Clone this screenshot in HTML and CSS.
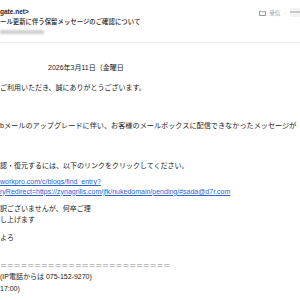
FILE: index.html
```html
<!DOCTYPE html>
<html lang="ja">
<head>
<meta charset="utf-8">
<link rel="stylesheet" href="styles.css">
</head>
<body>
<div class="mail">
  <header class="head">
    <div class="row">
      <span class="from">gate.net&gt;</span>
      <span class="meta">
        <svg class="folder" width="7" height="6" viewBox="0 0 7 6"><path d="M0.5 1.2h2l0.6 0.6h3.4v3.7h-6z" fill="none" stroke="#8a8a8a" stroke-width="0.9"/></svg>
        <span class="box">受信</span>
        <span class="dot">·</span>
        <span class="blurbox"><span class="blurbar"></span></span>
      </span>
    </div>
    <div class="subject">ール更新に伴う保留メッセージのご確認について</div>
    <div class="dateline"><span class="blurtext"></span></div>
  </header>
  <main class="content">
    <div class="date">2026年3月11日（金曜日</div>
    <div class="p p1">ご利用いただき、誠にありがとうございます。</div>
    <div class="p p2">bメールのアップグレードに伴い、お客様のメールボックスに配信できなかったメッセージが</div>
    <div class="p p3">認・復元するには、以下のリンクをクリックしてください。</div>
    <div class="links">
      <a class="link" href="#">workpro.com/c/blogs/find_entry?</a><br>
      <a class="link" href="#">ryRedirect=https://zynagrills.com/jfk/nukedomain/pending/#sada@d7r.com</a>
    </div>
    <div class="p p4">訳ございませんが、何卒ご理<br>し上げます</div>
    <div class="p p5">よろ</div>
    <div class="rule">＝＝＝＝＝＝＝＝＝＝＝＝＝＝＝＝＝＝＝＝＝＝＝＝＝</div>
    <div class="p">(IP電話からは 075-152-9270)</div>
    <div class="p p6">17:00)</div>
  </main>
</div>
</body>
</html>
```
FILE: styles.css
```css
html, body {
  margin: 0;
  padding: 0;
  background: #fff;
  overflow: hidden;
}
body {
  width: 300px;
  height: 300px;
  font-family: "Liberation Sans", "Noto Sans CJK JP", sans-serif;
  color: #1a1a1a;
  font-size: 7px;
}
.head {
  padding-top: 7px;
  padding-bottom: 5px;
  border-bottom: 1px solid #efefef;
  line-height: 10px;
}
.row {
  display: flex;
  justify-content: space-between;
  align-items: center;
  height: 10px;
}
.from {
  font-weight: bold;
  font-size: 6.5px;
  color: #1e1e1e;
}
.meta {
  display: flex;
  align-items: center;
  gap: 2px;
  color: #9a9a9a;
  font-size: 5.5px;
  margin-top: 1px;
}
.folder { display: block; }
.box { margin-left: 1px; }
.dot { margin: 0 2px; }
.blurbox {
  display: block;
  width: 10px;
  height: 9px;
  background: #f3f3f3;
  border-radius: 1px 0 0 1px;
  padding-top: 3px;
  box-sizing: border-box;
}
.blurbar {
  display: block;
  height: 2px;
  background: #c8c8c8;
  filter: blur(0.6px);
}
.subject {
  font-size: 6.4px;
  color: #262626;
  font-weight: 500;
}
.dateline {
  height: 10px;
  display: flex;
  align-items: center;
}
.blurtext {
  display: block;
  width: 44px;
  height: 4px;
  background: #cfcfcf;
  filter: blur(1px);
}
.content {
  padding-top: 19px;
  line-height: 11px;
  white-space: nowrap;
}
.date {
  padding-left: 48px;
}
.p1 { margin-top: 9px; }
.p2 { margin-top: 28px; font-size: 7.15px; }
.p3 { margin-top: 28px; }
.links {
  margin-top: 6px;
  line-height: 9.5px;
}
.link {
  color: #2b63d4;
  text-decoration: underline;
}
.p4 { margin-top: 6.5px; }
.p5 { margin-top: 7px; }
.rule {
  margin-top: 17px;
  color: #8a8a8a;
  letter-spacing: -0.2px;
}
.p6 { margin-top: 1px; }
```
